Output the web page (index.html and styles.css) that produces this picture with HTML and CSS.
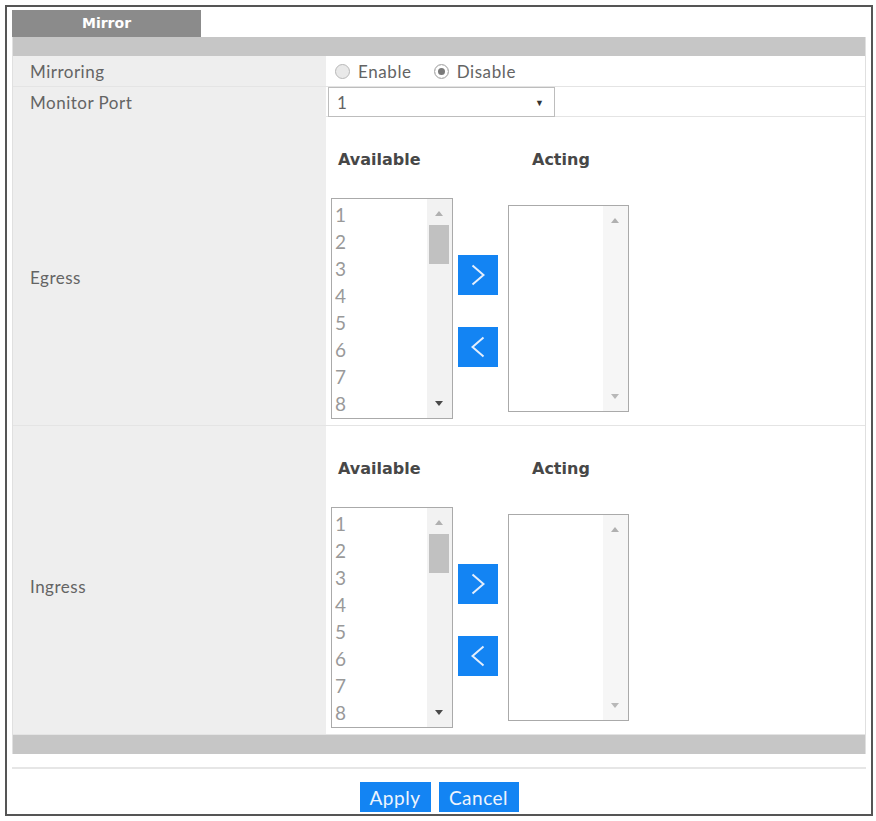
FILE: index.html
```html
<!DOCTYPE html>
<html lang="en">
  <head>
    <meta charset="UTF-8" />
    <meta name="viewport" content="width=device-width, initial-scale=1.0" />
    <title>Mirror</title>
    <link rel="stylesheet" href="styles.css">
  </head>
  <body>
    <div class="frame">
      <div class="tabs">
        <div class="tab">Mirror</div>
      </div>
      <div class="panel">
        <div class="bar"></div>

        <div class="row row-short">
          <div class="label">Mirroring</div>
          <div class="value">
            <label class="radio"><span class="dot"></span>Enable</label>
            <label class="radio"><span class="dot checked"></span>Disable</label>
          </div>
        </div>

        <div class="row row-short">
          <div class="label">Monitor Port</div>
          <div class="value">
            <div class="select">
              <span>1</span>
              <span class="caret">&#9660;</span>
            </div>
          </div>
        </div>

        <!-- Egress ports -->
        <div class="row row-tall">
          <div class="label">Egress</div>
          <div class="value">
            <div class="picker">
              <div class="head head-avail">Available</div>
              <div></div>
              <div class="head head-acting">Acting</div>
              <div class="listbox list-avail">
                <ul class="items">
                  <li>1</li><li>2</li><li>3</li><li>4</li>
                  <li>5</li><li>6</li><li>7</li><li>8</li>
                </ul>
                <div class="scroll">
                  <span class="arrow up"></span>
                  <span class="thumb"></span>
                  <span class="arrow down dark"></span>
                </div>
              </div>
              <div class="moves">
                <button class="move">
                  <svg width="14" height="22" viewBox="0 0 14 22"><path d="M1.5 1.5 L12.5 11 L1.5 20.5" /></svg>
                </button>
                <button class="move">
                  <svg width="14" height="22" viewBox="0 0 14 22"><path d="M12.5 1.5 L1.5 11 L12.5 20.5" /></svg>
                </button>
              </div>
              <div class="listbox list-acting">
                <div class="items"></div>
                <div class="scroll">
                  <span class="arrow up"></span>
                  <span class="arrow down"></span>
                </div>
              </div>
            </div>
          </div>
        </div>

        <!-- Ingress ports -->
        <div class="row row-tall">
          <div class="label">Ingress</div>
          <div class="value">
            <div class="picker">
              <div class="head head-avail">Available</div>
              <div></div>
              <div class="head head-acting">Acting</div>
              <div class="listbox list-avail">
                <ul class="items">
                  <li>1</li><li>2</li><li>3</li><li>4</li>
                  <li>5</li><li>6</li><li>7</li><li>8</li>
                </ul>
                <div class="scroll">
                  <span class="arrow up"></span>
                  <span class="thumb"></span>
                  <span class="arrow down dark"></span>
                </div>
              </div>
              <div class="moves">
                <button class="move">
                  <svg width="14" height="22" viewBox="0 0 14 22"><path d="M1.5 1.5 L12.5 11 L1.5 20.5" /></svg>
                </button>
                <button class="move">
                  <svg width="14" height="22" viewBox="0 0 14 22"><path d="M12.5 1.5 L1.5 11 L12.5 20.5" /></svg>
                </button>
              </div>
              <div class="listbox list-acting">
                <div class="items"></div>
                <div class="scroll">
                  <span class="arrow up"></span>
                  <span class="arrow down"></span>
                </div>
              </div>
            </div>
          </div>
        </div>

        <div class="bar"></div>
      </div>

      <div class="rule"></div>

      <div class="actions">
        <button class="btn btn-apply">Apply</button>
        <button class="btn btn-cancel">Cancel</button>
      </div>
    </div>
  </body>
</html>
```

FILE: styles.css
```css
* {
  box-sizing: border-box;
}
body {
  margin: 0;
  background-color: white;
  font-family: Lato, "Open Sans", sans-serif;
  color: #646464;
}
.frame {
  margin: 5px 3px 0 5px;
  height: 811px;
  padding: 3px 5px 4px 5px;
  border: 2px solid #555555;
}
.tabs {
  display: flex;
}
.tab {
  width: 189px;
  height: 27px;
  line-height: 27px;
  text-align: center;
  background-color: #8b8b8b;
  color: white;
  font-family: "DejaVu Sans", sans-serif;
  font-weight: bold;
  font-size: 14px;
}
.panel {
  border-left: 1px solid #e0e0e0;
  border-right: 1px solid #e0e0e0;
}
.bar {
  height: 19px;
  background-color: #c6c6c6;
}
.row {
  display: grid;
  grid-template-columns: 313px 1fr;
  border-bottom: 1px solid #e4e4e4;
}
.label {
  display: flex;
  align-items: center;
  padding-left: 17px;
  background-color: #eeeeee;
  font-size: 17px;
  letter-spacing: 0.5px;
}
.row-short {
  height: 31px;
}
.row-short:nth-of-type(3) {
  height: 30px;
}
.row-tall .label {
  padding-top: 12px;
}
.value {
  display: flex;
  align-items: center;
  padding-left: 2px;
}
.radio {
  display: flex;
  align-items: center;
  margin-left: 7px;
  margin-right: 15px;
  font-size: 17px;
  letter-spacing: 0.6px;
}
.dot {
  width: 15px;
  height: 15px;
  margin-right: 8px;
  border: 1px solid #b8b8b8;
  border-radius: 50%;
  background-color: #e9e9e9;
}
.dot.checked {
  background-color: white;
  border-color: #a8a8a8;
  box-shadow: inset 0 0 0 3px white, inset 0 0 0 8px #7a7a7a;
}
.select {
  display: flex;
  justify-content: space-between;
  align-items: center;
  width: 227px;
  height: 30px;
  padding: 0 10px 0 8px;
  border: 1px solid #bdbdbd;
  font-size: 17px;
}
.caret {
  font-size: 9px;
  color: #333;
}
.row-tall .value {
  align-items: flex-start;
  padding: 32px 0 6px 5px;
}
.picker {
  display: grid;
  grid-template-columns: 122px 40px 126px;
  column-gap: 5px;
  align-items: center;
}
.picker > .list-acting {
  margin-left: 5px;
}
.head {
  height: 22px;
  line-height: 22px;
  margin-bottom: 27px;
  font-family: "DejaVu Sans", sans-serif;
  font-weight: bold;
  font-size: 16px;
  color: #474747;
}
.head-avail {
  padding-left: 7px;
}
.head-acting {
  padding-left: 29px;
}
.listbox {
  display: flex;
  border: 1px solid #aaaaaa;
  background-color: white;
}
.list-avail {
  height: 221px;
}
.list-acting {
  height: 207px;
}
.items {
  flex: 1;
  margin: 0;
  padding: 2px 0 0 3px;
  list-style: none;
  font-size: 19px;
  line-height: 27px;
  color: #999999;
  overflow: hidden;
}
.scroll {
  position: relative;
  width: 25px;
  background-color: #f2f2f2;
}
.list-acting .scroll {
  background-color: #f6f6f6;
}
.arrow {
  position: absolute;
  left: 8px;
  width: 0;
  height: 0;
  border-left: 4px solid transparent;
  border-right: 4px solid transparent;
}
.arrow.up {
  top: 12px;
  border-bottom: 5px solid #b0b0b0;
}
.arrow.down {
  bottom: 12px;
  border-top: 5px solid #b8b8b8;
}
.arrow.down.dark {
  border-top-color: #4a4a4a;
}
.thumb {
  position: absolute;
  top: 26px;
  left: 2px;
  width: 20px;
  height: 39px;
  background-color: #c1c1c1;
}
.moves {
  display: flex;
  flex-direction: column;
  gap: 32px;
  margin-top: 4px;
}
.move {
  display: flex;
  justify-content: center;
  align-items: center;
  width: 40px;
  height: 40px;
  padding: 0;
  border: none;
  background-color: #1384f3;
}
.move path {
  fill: none;
  stroke: #e4eefc;
  stroke-width: 2;
}
.rule {
  height: 2px;
  margin-top: 13px;
  background-color: #e6e6e6;
}
.actions {
  display: flex;
  justify-content: center;
  gap: 8px;
  margin-top: 13px;
}
.btn {
  height: 30px;
  padding: 0;
  border: none;
  background-color: #1384f3;
  color: #eef4fd;
  font-family: Lato, "Open Sans", sans-serif;
  font-size: 19px;
  letter-spacing: 0.5px;
}
.btn-apply {
  width: 71px;
}
.btn-cancel {
  width: 80px;
}
```
